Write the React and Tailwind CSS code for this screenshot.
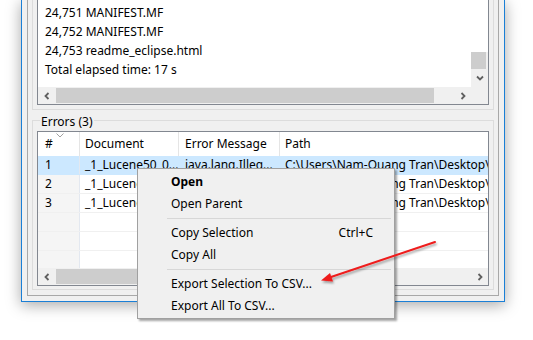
import React from "react";

const Arrow = ({ dir, color = "#606060" }) => {
  const pts = {
    left: "5.5,1 2.5,4 5.5,7",
    right: "2.5,1 5.5,4 2.5,7",
    down: "1,2.5 4,5.5 7,2.5",
  }[dir];
  return (
    <svg width="8" height="8" viewBox="0 0 8 8">
      <polyline points={pts} fill="none" stroke={color} strokeWidth="1.8" />
    </svg>
  );
};

const HScroll = ({ thumbLeft, thumbWidth }) => (
  <div className="relative h-[17px] flex-1 bg-[#f0f0f0]">
    <div className="absolute left-0 top-0 flex h-[17px] w-[17px] items-center justify-center">
      <Arrow dir="left" />
    </div>
    <div
      className="absolute top-[1px] h-[15px] bg-[#cdcdcd]"
      style={{ left: thumbLeft, width: thumbWidth }}
    />
    <div className="absolute right-0 top-0 flex h-[17px] w-[17px] items-center justify-center">
      <Arrow dir="right" />
    </div>
  </div>
);

const logLines = [
  "24,751 MANIFEST.MF",
  "24,752 MANIFEST.MF",
  "24,753 readme_eclipse.html",
  "Total elapsed time: 17 s",
];

const errors = [
  { n: 1, doc: "_1_Lucene50_0...", msg: "java.lang.Illeg...", path: "C:\\Users\\Nam-Quang Tran\\Desktop\\P" },
  { n: 2, doc: "_1_Lucene50_0...", msg: "java.lang.Illeg...", path: "C:\\Users\\Nam-Quang Tran\\Desktop\\P" },
  { n: 3, doc: "_1_Lucene50_0...", msg: "java.lang.Illeg...", path: "C:\\Users\\Nam-Quang Tran\\Desktop\\P" },
];

const MenuItem = ({ label, shortcut, bold }) => (
  <div className="flex h-[22px] items-center justify-between pl-[33px] pr-[21px]">
    <span className={bold ? "font-bold" : ""}>{label}</span>
    {shortcut && <span>{shortcut}</span>}
  </div>
);

const MenuSep = () => (
  <div className="flex h-[7px] items-center pl-[29px] pr-[3px]">
    <div className="h-px w-full bg-[#d7d7d7]" />
  </div>
);

export default function App() {
  return (
    <div className="relative h-[340px] w-[533px] overflow-hidden bg-white text-[12px] text-black font-['Segoe_UI','Noto_Sans',sans-serif]">
      {/* window */}
      <div className="ml-[21px] h-[302px] w-[484px] border-x border-b border-[#1a7fd6] bg-[#f0f0f0] px-[5px] pb-[5px] shadow-[0_3px_14px_rgba(0,0,0,0.35)]">
        <div className="flex h-full flex-col border-x border-b border-[#a8a8a8] px-[4px] pb-[5px]">
          {/* output pane */}
          <div className="border-x border-b border-[#dcdcdc] px-[4px] pb-[4px]">
            <div className="flex h-[105px] flex-col border-x border-b border-[#828790] bg-white">
              <div className="flex h-[87px]">
                <div className="flex-1 overflow-hidden pl-[7px] pt-[3px]">
                  {logLines.map((l) => (
                    <div key={l} className="h-[19px] whitespace-nowrap leading-[19px]">
                      {l}
                    </div>
                  ))}
                </div>
                <div className="flex w-[17px] flex-col">
                  <div className="h-[52px] bg-white" />
                  <div className="h-[17px] bg-[#f0f0f0]">
                    <div className="h-[17px] w-[15px] bg-[#cdcdcd]" />
                  </div>
                  <div className="flex flex-1 items-center justify-center bg-[#f0f0f0]">
                    <Arrow dir="down" />
                  </div>
                </div>
              </div>
              <div className="flex h-[17px]">
                <HScroll thumbLeft={18} thumbWidth={378} />
                <div className="w-[17px] bg-[#f0f0f0]" />
              </div>
            </div>
          </div>

          {/* errors group */}
          <div className="relative mt-[10px] h-[170px] border border-[#dcdcdc] px-[4px] pb-[3px] pt-[10px]">
            <div className="absolute left-[7px] top-[-7px] bg-[#f0f0f0] px-[1px] leading-[16px]">
              Errors (3)
            </div>
            <div className="flex h-[155px] flex-col border border-[#828790] bg-white">
              <div className="flex h-[24px] items-center">
                <div className="relative flex h-full w-[41px] items-center pl-[7px]">
                  #
                  <svg className="absolute left-[18px] top-[1px]" width="8" height="5" viewBox="0 0 8 5">
                    <polyline points="0.5,0.5 4,4 7.5,0.5" fill="none" stroke="#a0a0a0" strokeWidth="1" />
                  </svg>
                </div>
                <div className="flex h-full w-[99px] items-center border-l border-[#e5e5e5] pl-[5px]">Document</div>
                <div className="flex h-full w-[101px] items-center border-l border-[#e5e5e5] pl-[6px]">Error Message</div>
                <div className="flex h-full flex-1 items-center border-l border-[#e5e5e5] pl-[5px]">Path</div>
              </div>
              <div className="flex-1 overflow-hidden">
                {[...errors, null, null, null].map((e, i) => (
                  <div
                    key={i}
                    className={`flex h-[19px] border-b ${i === 0 ? "border-[#cce8ff] bg-[#cce8ff]" : "border-[#f0f0f0]"}`}
                  >
                    <div className={`flex w-[41px] items-center pl-[7px] ${i === 0 ? "" : "bg-[#f5f5f5]"}`}>
                      {e ? e.n : ""}
                    </div>
                    <div className="flex w-[99px] items-center overflow-hidden whitespace-nowrap border-l border-[#e3e8f0] pl-[5px]">
                      {e ? e.doc : ""}
                    </div>
                    <div className="flex w-[101px] items-center overflow-hidden whitespace-nowrap pl-[7px]">
                      {e ? e.msg : ""}
                    </div>
                    <div className="flex flex-1 items-center overflow-hidden whitespace-nowrap pl-[6px]">
                      {e ? e.path : ""}
                    </div>
                  </div>
                ))}
              </div>
              <div className="flex h-[17px]">
                <HScroll thumbLeft={18} thumbWidth={280} />
              </div>
            </div>
          </div>
        </div>
      </div>

      {/* context menu */}
      <div className="absolute left-[137px] top-[168px] h-[151px] w-[258px] border border-[#a0a0a0] bg-[#f0f0f0] pt-[2px] shadow-[2px_2px_2px_rgba(0,0,0,0.35)]">
        <MenuItem label="Open" bold />
        <MenuItem label="Open Parent" />
        <MenuSep />
        <MenuItem label="Copy Selection" shortcut="Ctrl+C" />
        <MenuItem label="Copy All" />
        <MenuSep />
        <MenuItem label="Export Selection To CSV..." />
        <MenuItem label="Export All To CSV..." />
      </div>

      {/* annotation arrow */}
      <svg className="pointer-events-none absolute left-0 top-0" width="533" height="340" viewBox="0 0 533 340">
        <defs>
          <filter id="sh" x="-10%" y="-50%" width="120%" height="200%">
            <feDropShadow dx="1" dy="2" stdDeviation="1.2" floodColor="#000" floodOpacity="0.35" />
          </filter>
        </defs>
        <g filter="url(#sh)">
          <line x1="435" y1="242" x2="331" y2="277" stroke="#ee1c1c" strokeWidth="2" strokeLinecap="round" />
          <polygon points="321,280.5 333,281.5 330,273" fill="#ee1c1c" />
        </g>
      </svg>
    </div>
  );
}
